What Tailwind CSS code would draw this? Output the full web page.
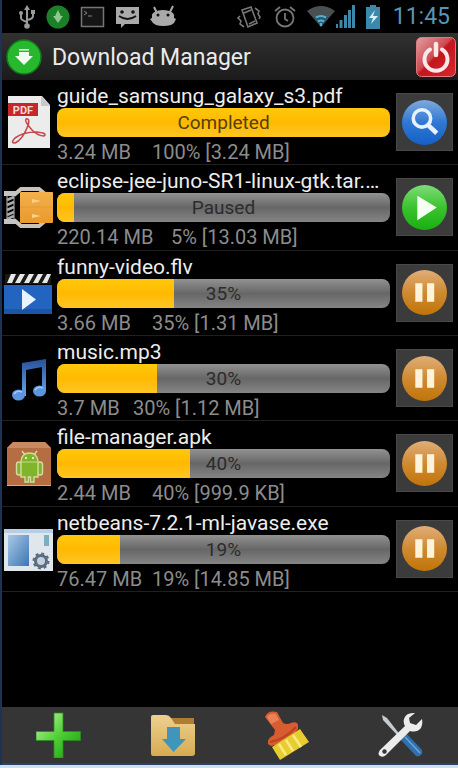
<!DOCTYPE html>
<html lang="en">
<head>
<meta charset="utf-8">
<meta name="viewport" content="width=device-width, initial-scale=1">
<title>Download Manager</title>
<script src="https://cdn.jsdelivr.net/npm/@tailwindcss/browser@4"></script>
</head>
<body class="bg-black">
<svg class="absolute size-0" aria-hidden="true">
  <defs>
    <linearGradient id="gGreen" x1="0" y1="0" x2="0" y2="1"><stop offset="0" stop-color="#7fdc78"/><stop offset=".5" stop-color="#3cc22f"/><stop offset="1" stop-color="#18b010"/></linearGradient>
    <linearGradient id="gBlue" x1="0" y1="0" x2="0" y2="1"><stop offset="0" stop-color="#7fa9dc"/><stop offset=".5" stop-color="#2f78d4"/><stop offset="1" stop-color="#1560c8"/></linearGradient>
    <linearGradient id="gOrange" x1="0" y1="0" x2="0" y2="1"><stop offset="0" stop-color="#e0ae78"/><stop offset=".5" stop-color="#cf8a32"/><stop offset="1" stop-color="#c07508"/></linearGradient>
    <linearGradient id="gRed" x1="0" y1="0" x2="1" y2="1"><stop offset="0" stop-color="#e0a0a4"/><stop offset=".45" stop-color="#cf4a50"/><stop offset=".5" stop-color="#c4161e"/><stop offset="1" stop-color="#d8262c"/></linearGradient>
    <linearGradient id="gPlus" x1="0" y1="0" x2="1" y2="1"><stop offset="0" stop-color="#c8f5b0"/><stop offset=".5" stop-color="#52cf35"/><stop offset="1" stop-color="#109a0c"/></linearGradient>
    <linearGradient id="gNote" x1="0" y1="0" x2="0" y2="1"><stop offset="0" stop-color="#25529c"/><stop offset="1" stop-color="#6ba4e8"/></linearGradient>
    <linearGradient id="gFolder" x1="0" y1="0" x2="0" y2="1"><stop offset="0" stop-color="#edd090"/><stop offset="1" stop-color="#d8ab52"/></linearGradient>
    <linearGradient id="gPane" x1="0" y1="0" x2="1" y2="1"><stop offset="0" stop-color="#a9c9e6"/><stop offset="1" stop-color="#3c76b4"/></linearGradient>
    <linearGradient id="gBox" x1="0" y1="0" x2="0" y2="1"><stop offset="0" stop-color="#f4b04c"/><stop offset="1" stop-color="#e89a2c"/></linearGradient>
    <symbol id="pause" viewBox="0 0 44 44"><circle cx="22" cy="22" r="22" fill="url(#gOrange)"/><path d="M13 13h7v18h-7zM24.500 13h7v18h-7z" fill="#fff3dc"/></symbol>
  </defs>
</svg>
<div class="flex min-h-screen flex-col border-l-2 border-[#1b3354] bg-black font-[Roboto,sans-serif] text-white">

  <div class="flex h-[33px] items-center justify-between pr-2 pl-4">
    <div class="flex items-center gap-2.5">
      <svg class="h-[24px] w-[18px]" viewBox="0 0 18 24" fill="none" stroke="#9a9a9a" stroke-width="2"><path d="M9 4v16M3 9v4q0 2 6 4M15 8v3q0 3-6 4"/><path d="M9 0l3 5H6z" fill="#9a9a9a" stroke="none"/><circle cx="9" cy="21" r="2.800" fill="#9a9a9a" stroke="none"/><circle cx="3" cy="8" r="2" fill="#9a9a9a" stroke="none"/><path d="M13 5h4v4h-4z" fill="#9a9a9a" stroke="none"/></svg>
      <svg class="size-[24px]" viewBox="0 0 24 24"><circle cx="12" cy="12" r="11.500" fill="#1c8028"/><path d="M12 5l2.500 5v1H17l-5 7-5-7h2.500v-1z" fill="#8cc890"/></svg>
      <svg class="size-[25px]" viewBox="0 0 25 25"><rect x="1.500" y="3.500" width="22" height="19" fill="#151515" stroke="#757575" stroke-width="1.500"/><path d="M4 7l3 2-3 2M8 12h4" fill="none" stroke="#858585"/></svg>
      <svg class="size-[25px]" viewBox="0 0 25 25"><path d="M1 3h23v17H10l-4 4v-4H1z" fill="#aaa"/><circle cx="7" cy="8" r="1.800" fill="#111"/><circle cx="18" cy="8" r="1.800" fill="#111"/><path d="M4 12q8.500 6 17 0" fill="none" stroke="#111" stroke-width="2"/></svg>
      <svg class="h-[24px] w-[26px]" viewBox="0 0 26 24"><path d="M4 2l3 6M23 1l-3 6" stroke="#aaa" stroke-width="2"/><path d="M3 8q4-3 10-3t10 3q2 2 1 5l2 1-2 4-3 2q-8 2-15 0l-3-2-3-4 2-1q-1-3 1-5z" fill="#aaa"/><circle cx="8" cy="10" r="1.500" fill="#111"/><circle cx="18" cy="10" r="1.500" fill="#111"/></svg>
    </div>
    <div class="flex items-center gap-1">
      <svg class="mr-2 size-[24px]" viewBox="0 0 24 24" fill="none" stroke="#777" stroke-width="1.600"><path d="M5 5l9-3 6 16-9 4zM7 8l7-3M12 19l6-3M3 11l-2 2 3 3-1 3 4 3M18 3l4 3-1 3 2 3-1 2"/></svg>
      <svg class="mr-1.5 size-[24px]" viewBox="0 0 24 24" fill="none" stroke="#777" stroke-width="1.800"><circle cx="12" cy="13" r="8.500"/><path d="M12 8v6l3 2M2 6l5-4M22 6l-5-4"/></svg>
      <svg class="h-[22px] w-[28px]" viewBox="0 0 28 22"><path d="M0 5Q14-5 28 5L14 21z" fill="#4a5052"/><path d="M7 11q7-5 14 0l-7 10z" fill="#285a6c"/><path d="M9 11.500q5-3 10 0M11 15.500q3-2 6 0M14 17v3" stroke="#55b0d0" stroke-width="2.200" fill="none"/></svg>
      <svg class="-ml-1 mr-1.5 h-[23px] w-[20px]" viewBox="0 0 20 23"><path d="M1 19h2v4H1zM4.500 15h3v8h-3zM9 10h3v13H9zM13 5h3v18h-3zM17 0h3v23h-3z" fill="#3b88a8"/></svg>
      <svg class="mr-2 h-[24px] w-[16px]" viewBox="0 0 16 24"><path d="M5 0h6v2h4v22H1V2h4z" fill="#3a88aa"/><path d="M10 5l-6 8h4l-2 6 7-8H8z" fill="#d4f0fa"/></svg>
      <time class="text-[23px] leading-[28px] text-[#5a94b4]">11:45</time>
    </div>
  </div>

  <header class="flex h-[47px] items-center bg-linear-to-b from-[#313131] to-[#1b1b1b] pr-0.5 pl-1">
    <svg class="size-[36px]" viewBox="0 0 36 36" aria-hidden="true"><circle cx="18" cy="18" r="17" fill="#27b82d" stroke="#127a1c" stroke-width="1.500"/><path d="M13 10h10v1.500H13zM13 13h10v4h4l-9 9-9-9h4z" fill="#effcef"/></svg>
    <h1 class="ml-2.5 flex-1 pt-0.5 text-[23px] leading-[30px] text-[#eaeaea]">Download Manager</h1>
    <button class="size-[40px]" aria-label="Exit"><svg class="size-full" viewBox="0 0 40 40"><rect x=".500" y=".500" width="39" height="39" rx="5" fill="url(#gRed)" stroke="#e07a7e"/><path d="M14 12.500a11.500 11.500 0 1 0 12 0" fill="none" stroke="#f8e8e8" stroke-width="4" stroke-linecap="round"/><path d="M20 7v11" stroke="#f8e8e8" stroke-width="4.500" stroke-linecap="round"/></svg></button>
  </header>

  <ul class="grid min-h-[512px] auto-rows-fr">
    <li class="flex items-center border-b border-[#202020] pr-[5px]">
      <svg class="h-[58px] w-[55px] shrink-0" viewBox="0 0 55 58" aria-hidden="true"><path d="M6 3h34l8 9v43H6z" fill="#ececec"/><path d="M39 3v10h9z" fill="#c8c8c8"/><path d="M6 10h30v13H6z" fill="#c8262a"/><text x="21" y="21" text-anchor="middle" class="text-[11px] font-bold" fill="#f6d8d8">PDF</text><path d="M24 26q5-1 1 9-5 12-12 15-5 0 0-5 8-6 21-6 12 1 8 4-6 0-12-6-8-9-6-11z" fill="none" stroke="#c44a4c" stroke-width="1.600"/></svg>
      <div class="min-w-0 flex-1 pt-0.5">
        <h2 class="h-[26px] truncate text-[21px] leading-[28px] text-[#ededed]">guide_samsung_galaxy_s3.pdf</h2>
        <div role="progressbar" aria-label="guide_samsung_galaxy_s3.pdf" aria-valuenow="100" class="relative h-[29px] overflow-hidden rounded-lg bg-linear-to-b from-[#929292] via-[#676767] to-[#858585]"><div class="h-full bg-linear-to-b from-[#ffc80c] via-[#ffb900] to-[#ffc620]" style="width:100%"></div><span class="absolute inset-0 text-center text-[19px] leading-[29px] text-[#54400a]">Completed</span></div>
        <p class="h-[27px] text-[20px] leading-[31px] whitespace-pre text-[#8c8c8c] [tab-size:19px]">3.24 MB&#9;100% [3.24 MB]</p>
      </div>
      <button class="ml-1.5 grid h-[58px] w-[57px] place-items-center border border-[#484848] bg-[#3b3b3b]" aria-label="Open"><svg class="size-[45px]" viewBox="0 0 44 44"><circle cx="22" cy="22" r="22" fill="url(#gBlue)"/><circle cx="19.500" cy="18" r="8.500" fill="none" stroke="#e8f2ff" stroke-width="3.500"/><path d="M25.500 24.500l8.500 8" stroke="#e8f2ff" stroke-width="4.500"/></svg></button>
    </li>
    <li class="flex items-center border-b border-[#202020] pr-[5px]">
      <svg class="h-[58px] w-[55px] shrink-0" viewBox="0 0 55 58" aria-hidden="true"><path d="M12 17l7-6h18l6 5M12 42l7 6h18l6-5" fill="none" stroke="#c8c2ba" stroke-width="4"/><rect x="18" y="14" width="33" height="31" rx="1" fill="url(#gBox)"/><path d="M30 21l9 2-9 2zM30 36l9 2-9 2z" fill="#f9d08c"/><path d="M18 29h33" stroke="#e09a34"/><path d="M5 17v26M12 17v26" stroke="#5c5c5c" stroke-width="2"/><path d="M5 22l7-3M5 27l7-3M5 32l7-3M5 37l7-3M5 41l7-3" stroke="#aaa" stroke-width="2.500"/><path d="M2 13h12v5H2zM2 41h12v5H2z" fill="#c4c4c4"/></svg>
      <div class="min-w-0 flex-1 pt-0.5">
        <h2 class="h-[26px] truncate text-[21px] leading-[28px] text-[#ededed]">eclipse-jee-juno-SR1-linux-gtk.tar.…</h2>
        <div role="progressbar" aria-label="eclipse-jee-juno-SR1-linux-gtk" aria-valuenow="5" class="relative h-[29px] overflow-hidden rounded-lg bg-linear-to-b from-[#929292] via-[#676767] to-[#858585]"><div class="h-full bg-linear-to-b from-[#ffc80c] via-[#ffb900] to-[#ffc620]" style="width:5%"></div><span class="absolute inset-0 text-center text-[19px] leading-[29px] text-[#2c2c2c]">Paused</span></div>
        <p class="h-[27px] text-[20px] leading-[31px] whitespace-pre text-[#8c8c8c] [tab-size:19px]">220.14 MB&#9;5% [13.03 MB]</p>
      </div>
      <button class="ml-1.5 grid h-[58px] w-[57px] place-items-center border border-[#484848] bg-[#3b3b3b]" aria-label="Resume"><svg class="size-[45px]" viewBox="0 0 44 44"><circle cx="22" cy="22" r="22" fill="url(#gGreen)"/><path d="M15 10.500v24L34 22z" fill="#f4fff2"/></svg></button>
    </li>
    <li class="flex items-center border-b border-[#202020] pr-[5px]">
      <svg class="h-[58px] w-[55px] shrink-0" viewBox="0 0 55 58" aria-hidden="true"><rect x="3" y="10" width="46" height="10" fill="#181818"/><path d="M9 10h5l-4 9H5zM18 10h5l-5 9h-5zM27 10h5l-5 9h-5zM36 10h5l-5 9h-5zM45 10h4l-4 9h-5z" fill="#e8e8e4"/><rect x="2" y="21" width="48" height="29" fill="#2264c0"/><path d="M2 45h48v5H2z" fill="#1a55a8"/><path d="M20 25v21l14-10.500z" fill="#eaf2fc"/></svg>
      <div class="min-w-0 flex-1 pt-0.5">
        <h2 class="h-[26px] truncate text-[21px] leading-[28px] text-[#ededed]">funny-video.flv</h2>
        <div role="progressbar" aria-label="funny-video.flv" aria-valuenow="35" class="relative h-[29px] overflow-hidden rounded-lg bg-linear-to-b from-[#929292] via-[#676767] to-[#858585]"><div class="h-full bg-linear-to-b from-[#ffc80c] via-[#ffb900] to-[#ffc620]" style="width:35%"></div><span class="absolute inset-0 text-center text-[19px] leading-[29px] text-[#2c2c2c]">35%</span></div>
        <p class="h-[27px] text-[20px] leading-[31px] whitespace-pre text-[#8c8c8c] [tab-size:19px]">3.66 MB&#9;35% [1.31 MB]</p>
      </div>
      <button class="ml-1.5 grid h-[58px] w-[57px] place-items-center border border-[#484848] bg-[#3b3b3b]" aria-label="Pause"><svg class="size-[45px]"><use href="#pause"/></svg></button>
    </li>
    <li class="flex items-center border-b border-[#202020] pr-[5px]">
      <svg class="h-[58px] w-[55px] shrink-0" viewBox="0 0 55 58" aria-hidden="true"><path d="M20 14l24-4v32h-4V18l-16 3v26h-4z" fill="url(#gNote)"/><ellipse cx="16.500" cy="46" rx="6.500" ry="5.500" fill="#5c94de"/><ellipse cx="37.500" cy="42" rx="6.500" ry="5.500" fill="#5c94de"/><path d="M12 45q3-4 8-2M33 41q3-4 8-2" stroke="#a6c8f4" stroke-width="1.500" fill="none"/></svg>
      <div class="min-w-0 flex-1 pt-0.5">
        <h2 class="h-[26px] truncate text-[21px] leading-[28px] text-[#ededed]">music.mp3</h2>
        <div role="progressbar" aria-label="music.mp3" aria-valuenow="30" class="relative h-[29px] overflow-hidden rounded-lg bg-linear-to-b from-[#929292] via-[#676767] to-[#858585]"><div class="h-full bg-linear-to-b from-[#ffc80c] via-[#ffb900] to-[#ffc620]" style="width:30%"></div><span class="absolute inset-0 text-center text-[19px] leading-[29px] text-[#2c2c2c]">30%</span></div>
        <p class="h-[27px] text-[20px] leading-[31px] whitespace-pre text-[#8c8c8c] [tab-size:19px]">3.7 MB&#9;30% [1.12 MB]</p>
      </div>
      <button class="ml-1.5 grid h-[58px] w-[57px] place-items-center border border-[#484848] bg-[#3b3b3b]" aria-label="Pause"><svg class="size-[45px]"><use href="#pause"/></svg></button>
    </li>
    <li class="flex items-center border-b border-[#202020] pr-[5px]">
      <svg class="h-[58px] w-[55px] shrink-0" viewBox="0 0 55 58" aria-hidden="true"><path d="M5 14l6-6h32l6 6v38H5z" fill="#b46e42"/><path d="M5 14l6-6h32l6 6z" fill="#c98a62"/><path d="M5 51.500h44" stroke="#d8a888"/><g fill="#80b42c" stroke="#d2dc9c" stroke-width="1.400"><path d="M20 17l4 5M35 17l-4 5"/><rect x="14.500" y="28" width="5" height="13" rx="2.500"/><rect x="35.500" y="28" width="5" height="13" rx="2.500"/><path d="M19 27q1-8 8.500-8t8.500 8v16h-4v5h-3.500v-5h-2v5H23v-5h-4z"/></g><path d="M20 28h15" stroke="#c8d890"/><circle cx="24" cy="24" r="1" fill="#fff"/><circle cx="31" cy="24" r="1" fill="#fff"/></svg>
      <div class="min-w-0 flex-1 pt-0.5">
        <h2 class="h-[26px] truncate text-[21px] leading-[28px] text-[#ededed]">file-manager.apk</h2>
        <div role="progressbar" aria-label="file-manager.apk" aria-valuenow="40" class="relative h-[29px] overflow-hidden rounded-lg bg-linear-to-b from-[#929292] via-[#676767] to-[#858585]"><div class="h-full bg-linear-to-b from-[#ffc80c] via-[#ffb900] to-[#ffc620]" style="width:40%"></div><span class="absolute inset-0 text-center text-[19px] leading-[29px] text-[#2c2c2c]">40%</span></div>
        <p class="h-[27px] text-[20px] leading-[31px] whitespace-pre text-[#8c8c8c] [tab-size:19px]">2.44 MB&#9;40% [999.9 KB]</p>
      </div>
      <button class="ml-1.5 grid h-[58px] w-[57px] place-items-center border border-[#484848] bg-[#3b3b3b]" aria-label="Pause"><svg class="size-[45px]"><use href="#pause"/></svg></button>
    </li>
    <li class="flex items-center border-b border-[#202020] pr-[5px]">
      <svg class="h-[58px] w-[55px] shrink-0" viewBox="0 0 55 58" aria-hidden="true"><rect x="2" y="9" width="49" height="42" fill="#dfe6ec"/><path d="M2 9h49v4H2z" fill="#b4cfe6"/><rect x="6" y="15" width="21" height="31" fill="url(#gPane)"/><rect x="42" y="15" width="5" height="11" fill="#7ab0bc"/><circle cx="39" cy="41" r="5.500" fill="#c4d0dc" stroke="#5c6c80" stroke-width="3"/><circle cx="39" cy="41" r="7.500" fill="none" stroke="#5c6c80" stroke-width="2" stroke-dasharray="3 2.890"/></svg>
      <div class="min-w-0 flex-1 pt-0.5">
        <h2 class="h-[26px] truncate text-[21px] leading-[28px] text-[#ededed]">netbeans-7.2.1-ml-javase.exe</h2>
        <div role="progressbar" aria-label="netbeans-7.2.1-ml-javase.exe" aria-valuenow="19" class="relative h-[29px] overflow-hidden rounded-lg bg-linear-to-b from-[#929292] via-[#676767] to-[#858585]"><div class="h-full bg-linear-to-b from-[#ffc80c] via-[#ffb900] to-[#ffc620]" style="width:19%"></div><span class="absolute inset-0 text-center text-[19px] leading-[29px] text-[#2c2c2c]">19%</span></div>
        <p class="h-[27px] text-[20px] leading-[31px] whitespace-pre text-[#8c8c8c] [tab-size:19px]">76.47 MB&#9;19% [14.85 MB]</p>
      </div>
      <button class="ml-1.5 grid h-[58px] w-[57px] place-items-center border border-[#484848] bg-[#3b3b3b]" aria-label="Pause"><svg class="size-[45px]"><use href="#pause"/></svg></button>
    </li>
  </ul>

  <nav class="mt-auto grid h-[58px] grid-cols-4 border-b-2 border-[#2c4266] bg-[#353535]">
    <button class="grid place-items-center" aria-label="Add download"><svg class="size-[46px]" viewBox="0 0 46 46"><path d="M18 1h9v18.500h17.500v9H27V46h-9V28.500H0v-9h18z" fill="url(#gPlus)" stroke="#2b8a22" stroke-width=".800"/></svg></button>
    <button class="grid place-items-center" aria-label="Downloads folder"><svg class="size-[46px]" viewBox="0 0 46 46"><path d="M20 6h24v10H20z" fill="#b07c30"/><path d="M3 3h13q3 0 5 3l4 6h20v29q0 3-3 3H3q-2 0-2-3V5q0-2 2-2z" fill="url(#gFolder)"/><path d="M17 15h13v12h6L23.500 40 12 27h5z" fill="#3f95bc"/></svg></button>
    <button class="grid place-items-center" aria-label="Clean up"><svg class="size-[50px]" viewBox="0 0 50 50"><path d="M3 7q3-7 12-5l6 11q4 2 8 0 6-2 7 2v4Q26 33 9 36l-3-2q-1-6 6-9l1-5z" fill="#d85c30"/><path d="M5 7q3-5 9-3l3 6-8 4z" fill="#ec8058"/><path d="M8 32q14-2 26-15" fill="none" stroke="#b84420" stroke-width="2"/><path d="M10 37l28-18 9 13-29 18z" fill="#e8cc30"/><path d="M17 34l7 11M24 30l7 11M31 25l8 12" stroke="#f8ec80" stroke-width="2.500"/></svg></button>
    <button class="grid place-items-center" aria-label="Settings"><svg class="size-[46px]" viewBox="0 0 46 46"><path d="M4 3l5 3 14 18-2 1L5 8z" fill="#c4ccd2"/><path d="M22 27l6-6 16 17q1 3-1 5t-5 1z" fill="#2f70ae"/><path d="M27 25l15 16" stroke="#6fa6d4" stroke-width="1.500"/><path d="M37 1q-9-1-11 6-1 4 1 7L2 38q-3 4 0 6 3 2 6-1l24-24q7 2 11-3 2-4 1-9l-6 6-6-2-1-5z" fill="#ececec"/><circle cx="6.500" cy="39.500" r="2.200" fill="#353535"/></svg></button>
  </nav>
  <div class="-ml-0.5 h-[3px] bg-[#cfdff6]"></div>
</div>
</body>
</html>
